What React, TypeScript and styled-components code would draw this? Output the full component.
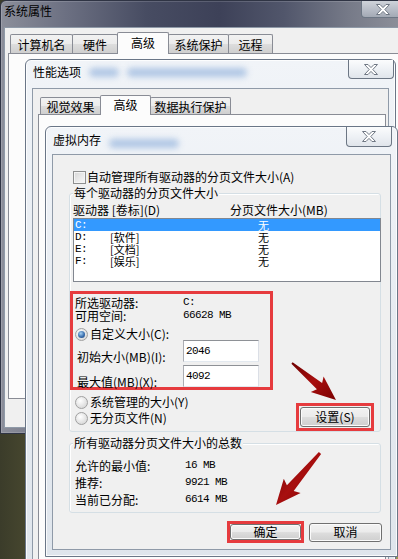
import React from 'react'
import styled, { createGlobalStyle } from 'styled-components'

const GlobalStyle = createGlobalStyle`
  html, body {
    margin: 0;
    padding: 0;
  }
  body {
    width: 398px;
    height: 559px;
    overflow: hidden;
    font-family: "Noto Sans CJK SC", "Liberation Sans", sans-serif;
    font-size: 12px;
    color: #000;
    background: #5e5d3a;
  }
`

const darkGlass = `linear-gradient(90deg, #8b8e9a 0%, #6c7082 16%, #474c62 36%, #3d4158 54%, #51566b 70%, #767a88 86%, #8f919b 100%)`
const lightGlass = `linear-gradient(180deg, #f1f4f8 0%, #e6ebf1 45%, #dfe5ec 100%)`

const Desktop = styled.div`
  position: relative;
  width: 398px;
  height: 559px;
  overflow: hidden;
  background: linear-gradient(90deg, #3b3c2a 0%, #6f6d3f 30%, #8f8b4b 70%, #9b9552 100%);
`

// windows lie on a desktop, so they are placed at their screen coordinates
const Win = styled.div<{ $x: number; $y: number; $w: number; $h: number; $dark?: boolean }>`
  position: absolute;
  left: ${p => p.$x}px;
  top: ${p => p.$y}px;
  width: ${p => p.$w}px;
  height: ${p => p.$h}px;
  box-sizing: border-box;
  display: flex;
  flex-direction: column;
  border: 1px solid ${p => (p.$dark ? '#2f3444' : '#6a7687')};
  border-radius: 6px 6px 0 0;
  background: ${p => (p.$dark ? darkGlass : lightGlass)};
  box-shadow: inset 0 0 0 1px ${p => (p.$dark ? 'rgba(255,255,255,0.15)' : 'rgba(255,255,255,0.8)')};
`

const TitleBar = styled.div<{ $h: number }>`
  height: ${p => p.$h}px;
  flex: none;
  display: flex;
  align-items: flex-start;
`

const WinTitle = styled.div<{ $pl: number; $pt: number }>`
  padding: ${p => p.$pt}px 0 0 ${p => p.$pl}px;
  line-height: 14px;
  font-size: 12px;
  color: #000;
  white-space: nowrap;
`

const Smear = styled.span<{ $w: number; $o?: number }>`
  display: inline-block;
  width: ${p => p.$w}px;
  height: 9px;
  margin: ${p => p.$o ?? 8}px 0 0 8px;
  border-radius: 5px;
  background: #9fbbe0;
  filter: blur(3px);
  opacity: 0.8;
`

const CloseBtn = styled.div<{ $w: number; $h: number; $mr: number; $dark?: boolean }>`
  margin-left: auto;
  margin-right: ${p => p.$mr}px;
  width: ${p => p.$w}px;
  height: ${p => p.$h}px;
  box-sizing: border-box;
  border: 1px solid #6c7684;
  border-top: none;
  border-radius: 0 0 4px 4px;
  background: ${p =>
    p.$dark
      ? 'linear-gradient(180deg, #cfd3da 0%, #b9bec8 50%, #a3a9b4 100%)'
      : 'linear-gradient(180deg, #fbfcfd 0%, #eef1f5 50%, #e0e5eb 100%)'};
  display: flex;
  align-items: center;
  justify-content: center;
`

const Client = styled.div<{ $ml: number; $mr: number; $h: number; $pt: number; $pl: number; $pr?: number }>`
  margin: 0 ${p => p.$mr}px 0 ${p => p.$ml}px;
  height: ${p => p.$h}px;
  flex: none;
  box-sizing: border-box;
  padding: ${p => p.$pt}px ${p => p.$pr ?? 0}px 0 ${p => p.$pl}px;
  background: #f0f0f0;
  border: 1px solid #8f9aa8;
  display: flex;
  flex-direction: column;
`

const TabStrip = styled.div<{ $h: number }>`
  --tab-h: ${p => p.$h}px;
  display: flex;
  align-items: flex-end;
  padding-left: 2px;
  height: calc(var(--tab-h) + 2px);
  flex: none;
`

const Tab = styled.div<{ $w: number; $active?: boolean }>`
  position: relative;
  z-index: ${p => (p.$active ? 2 : 1)};
  width: ${p => p.$w}px;
  height: ${p => (p.$active ? 'calc(var(--tab-h) + 3px)' : 'var(--tab-h)')};
  margin: 0 -1px ${p => (p.$active ? '-1px' : '0')} 0;
  box-sizing: border-box;
  border: 1px solid #898c95;
  border-bottom: none;
  border-radius: 2px 2px 0 0;
  background: ${p =>
    p.$active ? '#fcfcfc' : 'linear-gradient(180deg, #f2f2f2 0%, #ebebeb 50%, #dddddd 51%, #cfcfcf 100%)'};
  display: flex;
  align-items: center;
  justify-content: center;
  padding-bottom: ${p => (p.$active ? 2 : 0)}px;
  font-size: 12px;
  white-space: nowrap;
`

const TabPane = styled.div<{ $h?: number }>`
  height: ${p => (p.$h ? `${p.$h}px` : 'auto')};
  flex: ${p => (p.$h ? 'none' : '1')};
  background: #fcfcfc;
  border: 1px solid #898c95;
`

const Line = styled.div`
  display: flex;
  align-items: center;
  height: 14px;
  line-height: 14px;
  white-space: nowrap;
`

const CheckRow = styled(Line)`
  margin-left: 4px;
`

const CheckBox = styled.span`
  width: 13px;
  height: 13px;
  box-sizing: border-box;
  border: 1px solid #8e8f8f;
  background: linear-gradient(135deg, #d6d6d6 0%, #ececec 60%, #f7f7f7 100%);
  box-shadow: inset 0 0 0 1px #f4f4f4;
  margin-right: 1px;
  flex: none;
`

const Radio = styled.span<{ $on?: boolean }>`
  width: 13px;
  height: 13px;
  box-sizing: border-box;
  border-radius: 50%;
  border: 1px solid #a0a0a0;
  background: radial-gradient(circle at 40% 35%, #ffffff 0%, #e4e4e4 55%, #cfcfcf 100%);
  display: flex;
  align-items: center;
  justify-content: center;
  margin-right: 2px;
  flex: none;
  &::after {
    content: '';
    display: ${p => (p.$on ? 'block' : 'none')};
    width: 7px;
    height: 7px;
    border-radius: 50%;
    background: radial-gradient(circle at 40% 35%, #a7d1f2 0%, #3a6fae 55%, #1d3f74 100%);
  }
`

const Mono = styled.span`
  font-family: "Liberation Mono", monospace;
  font-size: 11px;
  letter-spacing: -0.6px;
`

const GroupBox = styled.div<{ $mt: number; $pb: number; $pl: number }>`
  margin-top: ${p => p.$mt}px;
  border: 1px solid #d5dfe5;
  border-radius: 3px;
  box-shadow: inset 1px 1px 0 #ffffff;
  padding: 0 0 ${p => p.$pb}px ${p => p.$pl}px;
  display: flex;
  flex-direction: column;
`

const GroupTitle = styled.div<{ $ml: number }>`
  align-self: flex-start;
  margin: -8px 0 0 ${p => p.$ml}px;
  padding: 0 1px;
  height: 14px;
  line-height: 14px;
  background: #f0f0f0;
  white-space: nowrap;
`

const HeaderRow = styled.div`
  display: grid;
  grid-template-columns: 157px 1fr;
  margin-top: 3px;
  height: 14px;
  line-height: 14px;
  white-space: nowrap;
`

const ListBox = styled.div`
  margin-top: 1px;
  width: 308px;
  height: 64px;
  box-sizing: border-box;
  border: 1px solid #828790;
  background: #ffffff;
`

const ListRow = styled.div<{ $selected?: boolean }>`
  display: grid;
  grid-template-columns: 35px 148px 1fr;
  align-items: center;
  height: 12px;
  padding-left: 1px;
  line-height: 12px;
  font-size: 11px;
  background: ${p => (p.$selected ? '#3399ff' : 'transparent')};
  color: ${p => (p.$selected ? '#ffffff' : '#000000')};
  white-space: nowrap;
`

const RedFrame = styled.div<{ $pad?: number }>`
  border: 3px solid #e63b3e;
  padding: ${p => p.$pad ?? 0}px;
  display: flex;
  flex-direction: column;
`

const DriveBox = styled(RedFrame)`
  margin: 9px 0 0 -3px;
  width: 203px;
  box-sizing: border-box;
  padding: 2px 0 0 2px;
`

const InfoRow = styled.div<{ $col: number }>`
  display: grid;
  grid-template-columns: ${p => p.$col}px 1fr;
  align-items: center;
  height: 13px;
  line-height: 13px;
  white-space: nowrap;
`

const RadioRow = styled.div<{ $mt: number }>`
  display: flex;
  align-items: center;
  margin-top: ${p => p.$mt}px;
  height: 12px;
  line-height: 12px;
  white-space: nowrap;
`

const FieldRow = styled.div<{ $mt: number }>`
  display: flex;
  align-items: flex-end;
  margin-top: ${p => p.$mt}px;
  height: 22px;
`

const FieldLabel = styled.div`
  width: 106px;
  padding-left: 2px;
  line-height: 13px;
  margin-bottom: -1px;
  white-space: nowrap;
`

const Field = styled.input`
  width: 76px;
  height: 22px;
  box-sizing: border-box;
  border: 1px solid #abadb3;
  border-top-color: #8e9196;
  border-right-color: #dbdfe6;
  border-bottom-color: #e3e9ef;
  padding: 0 0 0 2px;
  font-family: "Liberation Mono", monospace;
  font-size: 11px;
  letter-spacing: -0.6px;
  background: #ffffff;
  outline: none;
`

const OptionsRow = styled.div`
  display: flex;
  justify-content: space-between;
  align-items: flex-start;
  margin-top: 6px;
  padding-right: 6px;
`

const RadioCol = styled.div`
  display: flex;
  flex-direction: column;
  gap: 4px;
  padding-left: 2px;
`

const Btn = styled.button<{ $w: number; $h: number }>`
  width: ${p => p.$w}px;
  height: ${p => p.$h}px;
  box-sizing: border-box;
  padding: 0;
  border: 1px solid #707070;
  border-radius: 3px;
  background: linear-gradient(180deg, #f2f2f2 0%, #ebebeb 48%, #dddddd 52%, #cfcfcf 100%);
  box-shadow: inset 0 0 0 1px #fbfbfb;
  font-family: inherit;
  font-size: 12px;
  line-height: 12px;
  color: #000;
  display: flex;
  align-items: center;
  justify-content: center;
`

const SetWrap = styled(RedFrame)`
  margin-top: 7px;
`

const TotalRow = styled(InfoRow)<{ $mt: number }>`
  margin-top: ${p => p.$mt}px;
`

const BottomRow = styled.div`
  display: flex;
  align-items: center;
  justify-content: flex-end;
  gap: 5px;
  margin: 8px -1px 0 0;
`

const Overlay = styled.svg`
  position: absolute;
  left: 0;
  top: 0;
  pointer-events: none;
  z-index: 10;
`

function XGlyph() {
  return (
    <svg width="14" height="11" viewBox="0 0 14 11">
      <polygon
        points="0.5,0.5 4,0.5 7,3.6 10,0.5 13.5,0.5 8.8,5.5 13.5,10.5 10,10.5 7,7.4 4,10.5 0.5,10.5 5.2,5.5"
        fill="#ffffff"
        stroke="#707884"
        strokeWidth="1"
      />
    </svg>
  )
}

const drives = [
  { d: 'C:', label: '', selected: true },
  { d: 'D:', label: '[软件]' },
  { d: 'E:', label: '[文档]' },
  { d: 'F:', label: '[娱乐]' },
]

const totals = [
  ['允许的最小值:', '16 MB'],
  ['推荐:', '9921 MB'],
  ['当前已分配:', '6614 MB'],
]

export default function App() {
  return (
    <>
      <GlobalStyle />
      <Desktop>
        <Win $x={0} $y={0} $w={406} $h={434} $dark>
          <TitleBar $h={26}>
            <WinTitle $pl={3} $pt={3}>系统属性</WinTitle>
            <CloseBtn $w={43} $h={17} $mr={1} $dark>
              <XGlyph />
            </CloseBtn>
          </TitleBar>
          <Client $ml={3} $mr={3} $h={401} $pt={4} $pl={3}>
            <TabStrip $h={19}>
              <Tab $w={63}>计算机名</Tab>
              <Tab $w={46}>硬件</Tab>
              <Tab $w={52} $active>高级</Tab>
              <Tab $w={61}>系统保护</Tab>
              <Tab $w={45}>远程</Tab>
            </TabStrip>
            <TabPane $h={344} />
          </Client>
        </Win>

        <Win $x={25} $y={59} $w={371} $h={530}>
          <TitleBar $h={28}>
            <WinTitle $pl={7} $pt={5}>性能选项</WinTitle>
            <Smear $w={30} />
            <Smear $w={120} />
            <CloseBtn $w={46} $h={19} $mr={1}>
              <XGlyph />
            </CloseBtn>
          </TitleBar>
          <Client $ml={6} $mr={6} $h={480} $pt={6} $pl={5} $pr={2}>
            <TabStrip $h={17}>
              <Tab $w={61}>视觉效果</Tab>
              <Tab $w={51} $active>高级</Tab>
              <Tab $w={81}>数据执行保护</Tab>
            </TabStrip>
            <TabPane />
          </Client>
        </Win>

        <Win $x={45} $y={126} $w={353} $h={431}>
          <TitleBar $h={27}>
            <WinTitle $pl={7} $pt={6}>虚拟内存</WinTitle>
            <Smear $w={70} $o={12} />
            <CloseBtn $w={46} $h={20} $mr={5}>
              <XGlyph />
            </CloseBtn>
          </TitleBar>
          <Client $ml={6} $mr={6} $h={396} $pt={15} $pl={16} $pr={9}>
            <CheckRow>
              <CheckBox />
              自动管理所有驱动器的分页文件大小(A)
            </CheckRow>

            <GroupBox $mt={9} $pb={0} $pl={3}>
              <GroupTitle $ml={0}>每个驱动器的分页文件大小</GroupTitle>
              <HeaderRow>
                <span>驱动器 [卷标](D)</span>
                <span>分页文件大小(MB)</span>
              </HeaderRow>
              <ListBox>
                {drives.map(r => (
                  <ListRow key={r.d} $selected={r.selected}>
                    <Mono>{r.d}</Mono>
                    <span>{r.label}</span>
                    <span>无</span>
                  </ListRow>
                ))}
              </ListBox>

              <DriveBox>
                <InfoRow $col={108}>
                  <span>所选驱动器:</span>
                  <Mono>C:</Mono>
                </InfoRow>
                <InfoRow $col={108}>
                  <span>可用空间:</span>
                  <Mono>66628 MB</Mono>
                </InfoRow>
                <RadioRow $mt={6}>
                  <Radio $on />
                  自定义大小(C):
                </RadioRow>
                <FieldRow $mt={0}>
                  <FieldLabel>初始大小(MB)(I):</FieldLabel>
                  <Field readOnly value="2046" />
                </FieldRow>
                <FieldRow $mt={3}>
                  <FieldLabel>最大值(MB)(X):</FieldLabel>
                  <Field readOnly value="4092" />
                </FieldRow>
              </DriveBox>

              <OptionsRow>
                <RadioCol>
                  <RadioRow $mt={0}>
                    <Radio />
                    系统管理的大小(Y)
                  </RadioRow>
                  <RadioRow $mt={0}>
                    <Radio />
                    无分页文件(N)
                  </RadioRow>
                </RadioCol>
                <SetWrap $pad={1}>
                  <Btn $w={70} $h={20}>设置(S)</Btn>
                </SetWrap>
              </OptionsRow>
            </GroupBox>

            <GroupBox $mt={11} $pb={6} $pl={5}>
              <GroupTitle $ml={-2}>所有驱动器分页文件大小的总数</GroupTitle>
              {totals.map(([k, v], i) => (
                <TotalRow key={k} $col={110} $mt={i === 0 ? 9 : 4}>
                  <span>{k}</span>
                  <Mono>{v}</Mono>
                </TotalRow>
              ))}
            </GroupBox>

            <BottomRow>
              <RedFrame>
                <Btn $w={71} $h={16}>确定</Btn>
              </RedFrame>
              <Btn $w={73} $h={19}>取消</Btn>
            </BottomRow>
          </Client>
        </Win>

        <Overlay width="398" height="559" viewBox="0 0 398 559">
          <defs>
            <linearGradient id="arrowFill" x1="0" y1="0" x2="1" y2="1">
              <stop offset="0" stopColor="#6e0000" />
              <stop offset="0.5" stopColor="#a80f0f" />
              <stop offset="1" stopColor="#7a0000" />
            </linearGradient>
          </defs>
          <polygon
            points="291.4,363.8 316.9,389.2 310.8,391.9 336,400 323.6,376.5 322.1,383 292.6,362.2"
            fill="url(#arrowFill)"
          />
          <polygon
            points="318.9,452 286.9,485.2 283.8,478.8 276,505 300.6,493 293.7,491 321.1,454"
            fill="url(#arrowFill)"
          />
        </Overlay>
      </Desktop>
    </>
  )
}
